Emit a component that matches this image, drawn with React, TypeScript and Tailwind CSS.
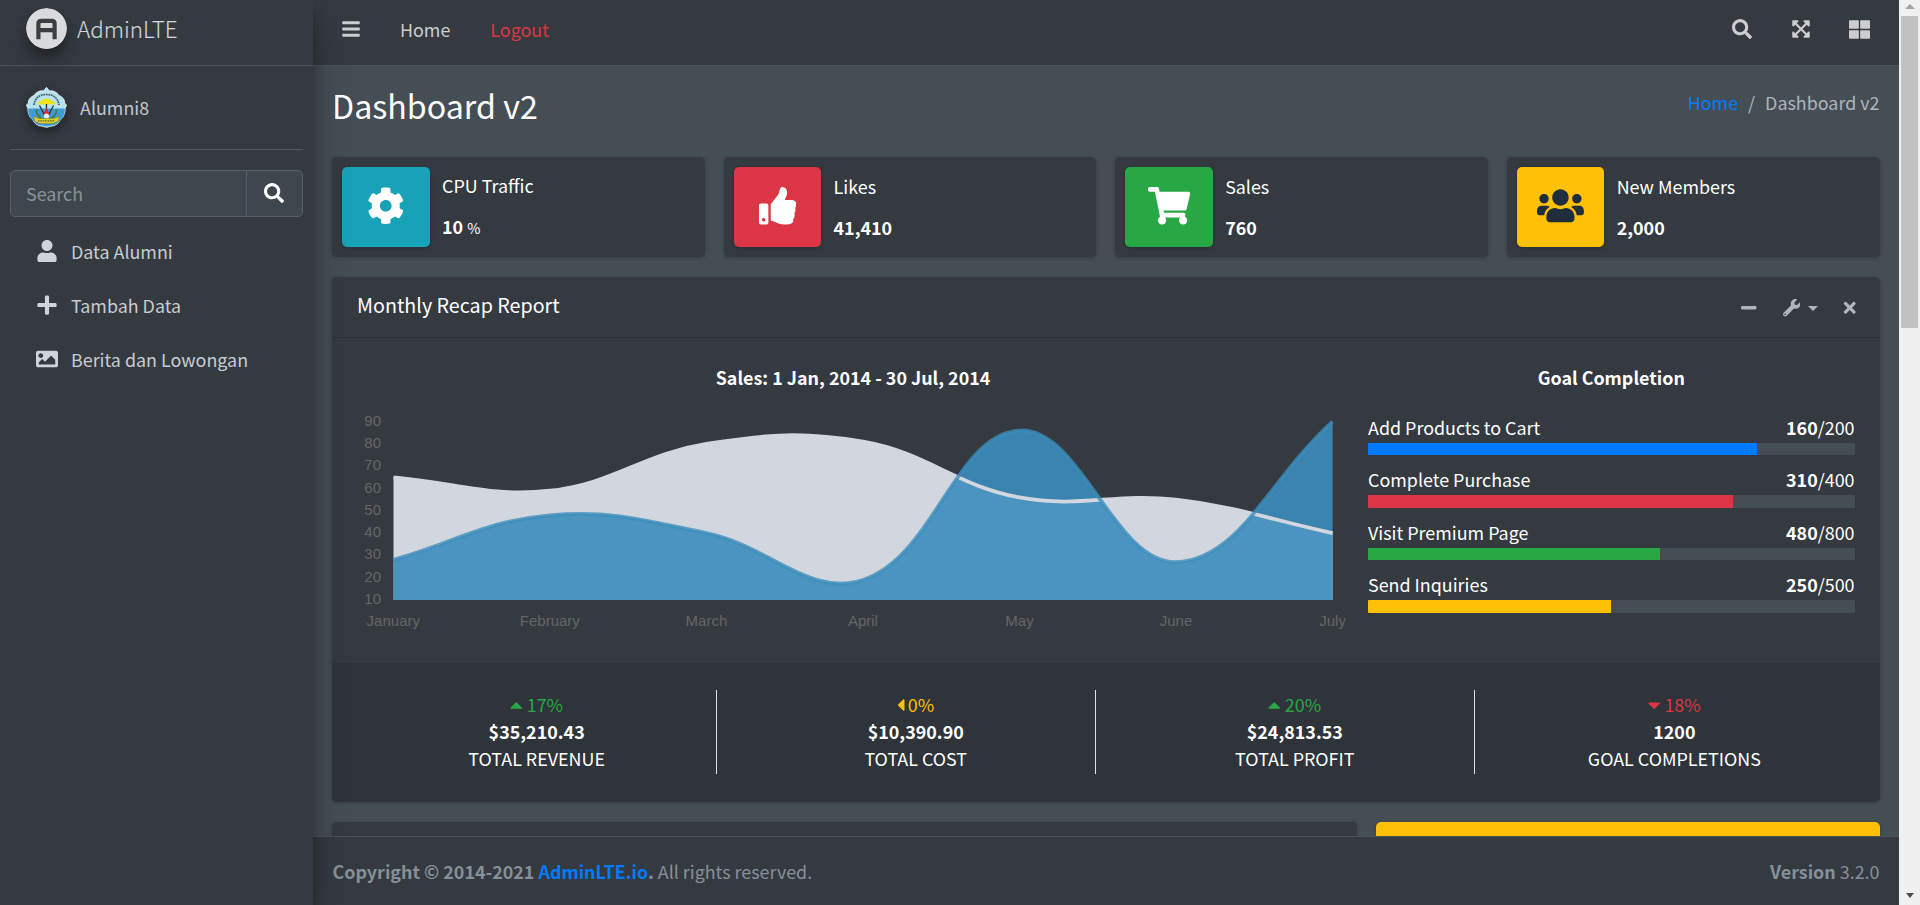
import type { ReactNode } from "react";
import {
  FaBars,
  FaCaretDown,
  FaCaretLeft,
  FaCaretUp,
  FaCog,
  FaExpandArrowsAlt,
  FaImage,
  FaMinus,
  FaPlus,
  FaSearch,
  FaShoppingCart,
  FaThLarge,
  FaThumbsUp,
  FaTimes,
  FaUser,
  FaUsers,
  FaWrench,
} from "react-icons/fa";

const cardShadow = "shadow-[0_0_1px_rgba(0,0,0,0.125),0_1px_4px_rgba(0,0,0,0.2)]";

/* ---------- Sidebar ---------- */

function BrandLogo() {
  return (
    <svg viewBox="0 0 41 41" className="size-[41px] rounded-full shadow-[0_12px_25px_rgba(0,0,0,0.19),0_8px_8px_rgba(0,0,0,0.23)]">
      <circle cx="20.5" cy="20.5" r="20.5" fill="#d9dadb" />
      <path
        d="M12.4 31.300 V15.6 Q12.4 12.8 15.2 12.8 H25.800 Q28.600 12.8 28.600 15.600 V31.300 M12.4 22.2 H28.6"
        fill="none"
        stroke="#3b3f44"
        strokeWidth="4.2"
      />
    </svg>
  );
}

function Crest() {
  return (
    <svg viewBox="0 0 41 41" className="size-[41px] overflow-visible rounded-full shadow-[0_4px_8px_rgba(0,0,0,0.16),0_4px_8px_rgba(0,0,0,0.23)]">
      <path
        d="M20.5 0.3 L23.5 4 Q29 3 33 8.5 Q39 11 38.5 16 L40.6 18 Q38.5 21 38.8 25 Q38 30 34 33 Q31 39 25 39 Q20.5 41.500 16 39 Q10 39 7 33 Q3 30 2.2 25 Q2.5 21 0.4 18 L2.5 16 Q2 11 8 8.5 Q12 3 17.5 4 Z"
        fill="#b5e4f0"
        stroke="#e9eef0"
        strokeWidth="0.9"
      />
      <path d="M2.300 21.500 H38.700 V25 Q38 30 34 33 Q31 38.600 25 38.600 Q20.500 40.500 16 38.600 Q10 38.600 7 33 Q3 30 2.300 25 Z" fill="#3f9bd8" />
      <path d="M8 18 Q9.500 7.500 20.500 7.500 Q31.500 7.500 33 18" fill="none" stroke="#46535a" strokeWidth="1.700" strokeDasharray="1.700 0.800" />
      <path d="M11.500 17.800 Q13 13 20.500 11.300 Q28 13 29.500 17.800 Q25 16.500 20.500 17.800 Q16 16.500 11.500 17.800 Z" fill="#f0e21c" />
      <path d="M20.500 17 V24 M13.500 18.500 L18.500 28 M27.500 18.500 L22.500 28" stroke="#26323a" strokeWidth="1.300" />
      <path d="M20.500 20.500 L23.500 27 H17.500 Z" fill="#e3262e" />
      <circle cx="20.500" cy="29" r="2.600" fill="#e8eef2" />
      <path d="M10.500 22 Q10 28 15.500 31 M30.500 22 Q31 28 25.500 31" fill="none" stroke="#4c7d3a" strokeWidth="1.800" />
      <path d="M7.500 29.500 L13.500 31.500 H27.500 L33.500 29.500 L32 34.500 L27 36.500 H14 L9 34.500 Z" fill="#dccf25" stroke="#6d6f2a" strokeWidth="0.400" />
      <path d="M12 33.900 H29" stroke="#5c6126" strokeWidth="1.200" strokeDasharray="1.500 0.900" />
    </svg>
  );
}

const menu: { label: string; icon: ReactNode }[] = [
  { label: "Data Alumni", icon: <FaUser /> },
  { label: "Tambah Data", icon: <FaPlus /> },
  { label: "Berita dan Lowongan", icon: <FaImage /> },
];

function Sidebar() {
  return (
    <aside className="relative z-20 flex h-full w-[313px] shrink-0 flex-col bg-[#343a40] text-[#c2c7d0] shadow-[0_17px_35px_rgba(0,0,0,0.25),0_12px_12px_rgba(0,0,0,0.22)]">
      <a className="flex h-[66px] items-start gap-[10px] border-b border-[#4b545c] pt-2 pl-[26px]">
        <BrandLogo />
        <span className="text-[22.4px] leading-[41px] font-light text-white/80">AdminLTE</span>
      </a>
      <div className="flex flex-col px-[10px]">
        <div className="mt-5 flex h-16 items-start gap-[13px] border-b border-[#4f5962] pl-4">
          <div className="pt-px">
            <Crest />
          </div>
          <span className="pt-[6px]">Alumni8</span>
        </div>
        <div className="mt-5 flex h-[47px] rounded-[5px] border border-[#56606a] bg-[#3f474e]">
          <span className="flex flex-1 items-center pb-[2px] pl-[15px] text-[#8b9299]">Search</span>
          <span className="flex w-[56px] items-center justify-center border-l border-[#56606a] pr-[2px] pb-px text-white">
            <FaSearch className="size-5" />
          </span>
        </div>
        <nav className="mt-[10px] flex flex-col gap-1">
          {menu.map((item) => (
            <a key={item.label} className="flex h-[50px] items-center pl-5">
              <span className="mb-[2px] flex w-[34px] justify-center text-[22px] text-[#cfd3da]">{item.icon}</span>
              <span className="mb-[2px] ml-[7px] text-[#c8ccd4]">{item.label}</span>
            </a>
          ))}
        </nav>
      </div>
    </aside>
  );
}

/* ---------- Top bar ---------- */

function Navbar() {
  return (
    <header className="flex h-[66px] shrink-0 items-center border-b border-[#4b545c] bg-[#343a40] pr-[29px] pb-[7px] pl-[28px] text-white/75">
      <FaBars className="size-5" />
      <a className="ml-[39px]">Home</a>
      <a className="ml-[40px] text-[#dc3545]">Logout</a>
      <div className="ml-auto flex items-center">
        <FaSearch className="size-5" />
        <FaExpandArrowsAlt className="ml-[39px] size-5" />
        <FaThLarge className="ml-[38px] size-[21px]" />
      </div>
    </header>
  );
}

/* ---------- Info boxes ---------- */

const infoBoxes: { title: string; value: string; unit?: string; tone: string; icon: ReactNode }[] = [
  { title: "CPU Traffic", value: "10", unit: "%", tone: "bg-[#17a2b8] text-white", icon: <FaCog className="h-[37.5px] w-[37.5px]" /> },
  { title: "Likes", value: "41,410", tone: "bg-[#dc3545] text-white", icon: <FaThumbsUp className="h-[37.5px] w-[37.5px]" /> },
  { title: "Sales", value: "760", tone: "bg-[#28a745] text-white", icon: <FaShoppingCart className="h-[37.5px] w-[42.2px]" /> },
  { title: "New Members", value: "2,000", tone: "bg-[#ffc107] text-[#1f2d3d]", icon: <FaUsers className="h-[37.5px] w-[46.9px]" /> },
];

function InfoBoxes() {
  return (
    <div className="grid grid-cols-4 gap-[18.75px]">
      {infoBoxes.map((box) => (
        <div key={box.title} className={`flex h-[100px] rounded-[5px] bg-[#343a40] p-[10px] text-white ${cardShadow}`}>
          <div className={`flex w-[87.5px] items-center justify-center rounded-[5px] pb-[2px] ${cardShadow} ${box.tone}`}>{box.icon}</div>
          <div className="flex flex-col justify-center gap-[5px] pb-[2px] pl-[12.5px] leading-9">
            <span>{box.title}</span>
            <span className="font-bold">
              {box.value}
              {box.unit && <small className="ml-1 text-[14.3px] font-normal">{box.unit}</small>}
            </span>
          </div>
        </div>
      ))}
    </div>
  );
}

/* ---------- Sales chart ---------- */

type Point = { x: number; y: number };

const months = ["January", "February", "March", "April", "May", "June", "July"];
const ticks = [90, 80, 70, 60, 50, 40, 30, 20, 10];
const digitalGoods = [28, 48, 40, 19, 86, 27, 90];
const electronics = [65, 59, 80, 81, 56, 55, 40];

const area = { left: 36.3, right: 975.6, top: 8.6, bottom: 187 };

const toY = (value: number) => area.bottom - ((value - 10) * (area.bottom - area.top)) / 80;
const toX = (index: number) => area.left + (index * (area.right - area.left)) / 6;
const clampY = (y: number) => Math.min(area.bottom, Math.max(area.top, y));

/** Cubic spline through the values; control handles scale with neighbour distance. */
function splinePath(values: number[], tension = 0.4): string {
  const points: Point[] = values.map((value, i) => ({ x: toX(i), y: toY(value) }));
  const handles = points.map((current, i) => {
    const prev = points[i - 1] ?? current;
    const next = points[i + 1] ?? current;
    const before = Math.hypot(current.x - prev.x, current.y - prev.y);
    const after = Math.hypot(next.x - current.x, next.y - current.y);
    const fa = (tension * before) / (before + after);
    const fb = (tension * after) / (before + after);
    return {
      inX: current.x - fa * (next.x - prev.x),
      inY: clampY(current.y - fa * (next.y - prev.y)),
      outX: current.x + fb * (next.x - prev.x),
      outY: clampY(current.y + fb * (next.y - prev.y)),
    };
  });
  return points
    .map((p, i) =>
      i === 0
        ? `M${p.x} ${p.y}`
        : `C${handles[i - 1].outX} ${handles[i - 1].outY} ${handles[i].inX} ${handles[i].inY} ${p.x} ${p.y}`,
    )
    .join(" ");
}

function SalesChart() {
  const close = ` L${area.right} ${area.bottom} L${area.left} ${area.bottom} Z`;
  const blue = splinePath(digitalGoods);
  const grey = splinePath(electronics);
  return (
    <svg width="992" height="225" viewBox="0 0 992 225" className="block overflow-visible font-['Liberation_Sans',sans-serif] text-[15px]">
      <defs>
        <clipPath id="plot">
          <rect x={area.left} y={area.top - 2} width={area.right - area.left + 0.4} height={area.bottom - area.top + 4} />
        </clipPath>
      </defs>
      <g clipPath="url(#plot)">
        <path d={grey + close} fill="#d2d6de" />
        <path d={blue + close} fill="#3c8dbc" fillOpacity="0.9" />
        <path d={grey} fill="none" stroke="#d2d6de" strokeWidth="3.75" />
        <path d={blue} fill="none" stroke="#3c8dbc" strokeOpacity="0.8" strokeWidth="3.75" />
      </g>
      <g fill="#666666">
        {ticks.map((tick) => (
          <text key={tick} x="24" y={toY(tick) + 4} textAnchor="end">
            {tick}
          </text>
        ))}
        {months.map((month, i) => (
          <text key={month} x={toX(i)} y="213" textAnchor="middle">
            {month}
          </text>
        ))}
      </g>
    </svg>
  );
}

/* ---------- Recap card ---------- */

const goals = [
  { label: "Add Products to Cart", done: 160, total: 200, percent: 80, bar: "bg-[#007bff]" },
  { label: "Complete Purchase", done: 310, total: 400, percent: 75, bar: "bg-[#dc3545]" },
  { label: "Visit Premium Page", done: 480, total: 800, percent: 60, bar: "bg-[#28a745]" },
  { label: "Send Inquiries", done: 250, total: 500, percent: 50, bar: "bg-[#ffc107]" },
];

const totals: { change: string; tone: string; icon: ReactNode; value: string; label: string }[] = [
  { change: "17%", tone: "text-[#28a745]", icon: <FaCaretUp className="mr-1 h-5 w-[12.5px]" />, value: "$35,210.43", label: "TOTAL REVENUE" },
  { change: "0%", tone: "text-[#ffc107]", icon: <FaCaretLeft className="mr-[3px] h-5 w-[7.5px]" />, value: "$10,390.90", label: "TOTAL COST" },
  { change: "20%", tone: "text-[#28a745]", icon: <FaCaretUp className="mr-1 h-5 w-[12.5px]" />, value: "$24,813.53", label: "TOTAL PROFIT" },
  { change: "18%", tone: "text-[#dc3545]", icon: <FaCaretDown className="mr-1 h-5 w-[12.5px]" />, value: "1200", label: "GOAL COMPLETIONS" },
];

function RecapCard() {
  return (
    <section className={`mt-5 flex h-[525px] shrink-0 flex-col overflow-hidden rounded-[5px] bg-[#343a40] text-white ${cardShadow}`}>
      <div className="flex h-[61px] items-center justify-between border-b border-black/12 pr-[21px] pl-[25px]">
        <h3 className="pb-1 text-[19.7px]">Monthly Recap Report</h3>
        <div className="flex items-center pt-[2px] text-[17.5px] text-[#adb5bd]">
          <FaMinus />
          <FaWrench className="ml-[25px]" />
          <span className="ml-2 size-0 border-x-[5.25px] border-t-[5.25px] border-x-transparent border-t-current" />
          <FaTimes className="ml-[23px]" />
        </div>
      </div>
      <div className="flex h-[325px] gap-[19px] px-[25px] pt-6">
        <div className="w-[992px]">
          <p className="mb-[21px] text-center font-bold">Sales: 1 Jan, 2014 - 30 Jul, 2014</p>
          <SalesChart />
        </div>
        <div className="flex-1">
          <p className="mb-[19.75px] text-center font-bold">Goal Completion</p>
          {goals.map((goal) => (
            <div key={goal.label} className="mb-[9px]">
              <div className="mb-px flex justify-between">
                <span>{goal.label}</span>
                <span>
                  <b>{goal.done}</b>/{goal.total}
                </span>
              </div>
              <div className="h-[12.5px] overflow-hidden rounded-[1px] bg-[#454d55]">
                <div className={`h-full ${goal.bar}`} style={{ width: `${goal.percent}%` }} />
              </div>
            </div>
          ))}
        </div>
      </div>
      <div className="grid flex-1 grid-cols-4 gap-[18.75px] bg-black/10 px-[25px] pt-[27px] leading-[27px]">
        {totals.map((total) => (
          <div key={total.label} className="flex h-[84px] flex-col items-center border-r border-[#dee2e6] pt-[1px] last:border-r-0">
            <span className={`flex items-center ${total.tone}`}>
              {total.icon}
              {total.change}
            </span>
            <span className="font-bold">{total.value}</span>
            <span>{total.label}</span>
          </div>
        ))}
      </div>
    </section>
  );
}

/* ---------- Page ---------- */

function Scrollbar() {
  return (
    <div className="relative z-30 flex w-[21px] shrink-0 flex-col items-center bg-[#f0f0f0]">
      <span className="mt-1 size-0 border-x-[5px] border-b-[5px] border-x-transparent border-b-[#a3a3a3]" />
      <span className="mt-[7px] h-[312px] w-[17px] bg-[#c1c1c1]" />
      <span className="mt-auto mb-[7px] size-0 border-x-[4.5px] border-t-[5px] border-x-transparent border-t-[#505050]" />
    </div>
  );
}

export default function App() {
  return (
    <div className="flex h-[905px] w-[1920px] overflow-hidden bg-[#454d55] font-['Noto_Sans_CJK_SC',sans-serif] text-[17.9px] leading-[30px]">
      <Sidebar />
      <div className="flex min-w-0 flex-1 flex-col">
        <Navbar />
        <main className="flex min-h-0 flex-1 flex-col overflow-hidden pr-[19.5px] pl-[19px]">
          <div className="flex h-[91px] shrink-0 items-start justify-between pt-[18px]">
            <h1 className="text-[32.2px] leading-[43px] text-white">Dashboard v2</h1>
            <div className="flex gap-[10px] leading-9 text-[#adb5bd]">
              <a className="text-[#007bff]">Home</a>
              <span>/</span>
              <span>Dashboard v2</span>
            </div>
          </div>
          <InfoBoxes />
          <RecapCard />
          <div className="mt-5 flex shrink-0 gap-[19px]">
            <div className={`h-12 w-[1025px] rounded-[5px] bg-[#343a40] ${cardShadow}`} />
            <div className={`h-12 flex-1 rounded-[5px] bg-[#ffc107] ${cardShadow}`} />
          </div>
        </main>
        <footer className="z-10 flex h-[69px] shrink-0 items-center justify-between border-t border-[#4b545c] bg-[#343a40] pr-[19.5px] pl-[19.5px] text-[#869099]">
          <span>
            <b>
              Copyright © 2014-2021 <a className="text-[#007bff]">AdminLTE.io</a>.
            </b>{" "}
            All rights reserved.
          </span>
          <span>
            <b>Version</b> 3.2.0
          </span>
        </footer>
      </div>
      <Scrollbar />
    </div>
  );
}
